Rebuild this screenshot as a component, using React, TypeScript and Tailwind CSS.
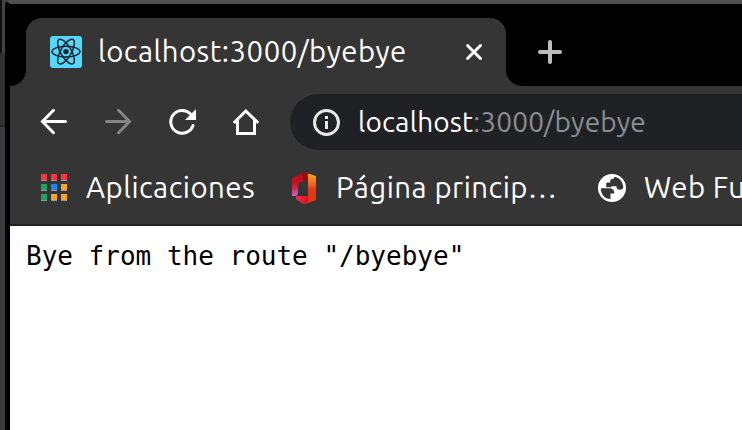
import type { ReactNode } from "react";

const UI_FONT = "font-['Ubuntu','Noto_Sans',sans-serif]";

function ReactLogo() {
  return (
    <svg className="h-8 w-8 shrink-0" viewBox="0 0 32 32" fill="none">
      <rect width="32" height="32" rx="3" fill="#53d7fb" />
      <g stroke="#16242b" strokeWidth="1.5">
        <ellipse cx="16" cy="15.6" rx="14" ry="5.3" />
        <ellipse cx="16" cy="15.6" rx="14" ry="5.3" transform="rotate(60 16 15.6)" />
        <ellipse cx="16" cy="15.6" rx="14" ry="5.3" transform="rotate(120 16 15.6)" />
      </g>
      <circle cx="16" cy="15.6" r="2.7" fill="#16242b" />
    </svg>
  );
}

function NavIcon({ children, color = "text-white" }: { children: ReactNode; color?: string }) {
  return (
    <svg className={`h-8 w-8 shrink-0 ${color}`} viewBox="0 0 32 32" fill="none" stroke="currentColor" strokeWidth="3">
      {children}
    </svg>
  );
}

function AppsGrid() {
  const tiles = ["#fd3639", "#fd3639", "#fd3639", "#1da462", "#1588f5", "#f6a42c", "#1da462", "#f6a42c", "#f6a42c"];
  return (
    <div className="grid w-[26px] shrink-0 grid-cols-[6px_6px_6px] gap-x-1 gap-y-[3px]">
      {tiles.map((color, i) => (
        <div key={i} className="h-[7px] border-b border-[#969696]" style={{ backgroundColor: color }} />
      ))}
    </div>
  );
}

function OfficeLogo() {
  return (
    <svg className="h-8 w-[26px] shrink-0" viewBox="0 0 26 32">
      <defs>
        <linearGradient id="left" x1="0" y1="0" x2="0" y2="1">
          <stop offset="0" stopColor="#a90b10" />
          <stop offset=".55" stopColor="#cc1730" />
          <stop offset="1" stopColor="#ca65b5" />
        </linearGradient>
        <linearGradient id="right" x1="0" y1="0" x2="0" y2="1">
          <stop offset="0" stopColor="#fba51e" />
          <stop offset=".35" stopColor="#ed6523" />
          <stop offset=".55" stopColor="#df3a16" />
          <stop offset="1" stopColor="#df3a16" />
        </linearGradient>
        <linearGradient id="foot">
          <stop offset="0" stopColor="#ff2945" />
          <stop offset="1" stopColor="#d01227" />
        </linearGradient>
      </defs>
      <path d="M1 6 12 0.5h4V8L8.5 10.5 7 13v9l-2 2H1Z" fill="url(#left)" />
      <path d="M11 1.2 15 0l2 1.5V8l-4 1Z" fill="#8d1011" />
      <path d="M5 24h12v7l-2 1h-3l-7-5Z" fill="url(#foot)" />
      <path d="M17 1.5 25 4v24l-8 3Z" fill="url(#right)" />
    </svg>
  );
}

function Globe() {
  return (
    <svg className="h-[34px] w-[34px] shrink-0" viewBox="0 0 34 34">
      <circle cx="17" cy="17" r="14" fill="#fff" />
      <g fill="#353535">
        <path d="M5.8 17.3h8.5c3 0 5 1.8 5 4.7 0 .4-.2.6-.6.6h-3.2v5.5C9.7 28 5.8 23.5 5.8 17.3Z" />
        <path d="M19.4 5.8C25 6.8 28.3 11.5 28.3 17q-1 1.8-3.4 1.8c-2.4 0-3.5-1.5-3.5-3.5h-5v1h-5.2v-3.4q0-1.3 1.5-1.3h2.6v-2q0-1.6 1.8-1.6h.5q1.8 0 1.8-2.2Z" />
      </g>
    </svg>
  );
}

function TabBar() {
  return (
    <div className="flex h-[82px] shrink-0 bg-black">
      <div className="w-4 shrink-0 self-end bg-[#353535]">
        <div className="h-4 rounded-br-[16px] bg-black" />
      </div>
      <div className="mt-[14px] flex w-[480px] shrink-0 items-start rounded-t-[16px] bg-[#353535] pt-[18px] pl-6">
        <ReactLogo />
        <span className={`ml-4 w-[367px] shrink-0 text-[29.33px] leading-8 tracking-[0.5px] text-white ${UI_FONT}`}>
          localhost:3000/byebye
        </span>
        <svg className="mt-[7px] h-[18px] w-[18px]" viewBox="0 0 18 18" stroke="#fff" strokeWidth="3" strokeLinecap="round">
          <path d="m2.5 2.5 13 13m0-13-13 13" />
        </svg>
      </div>
      <div className="w-4 shrink-0 self-end bg-[#353535]">
        <div className="h-4 rounded-bl-[16px] bg-black" />
      </div>
      <svg className="mt-9 ml-4 h-6 w-6" viewBox="0 0 24 24" stroke="#bdbdbd" strokeWidth="4" strokeLinecap="round">
        <path d="M2 12h20M12 2v20" />
      </svg>
    </div>
  );
}

function Toolbar() {
  return (
    <div className="flex h-[72px] shrink-0 items-center bg-[#353535] pl-7">
      <div className="flex gap-8">
        <NavIcon><path d="M27.5 15.5H5M15.5 4.3 4.5 15.5l11 11.2" strokeLinecap="round" /></NavIcon>
        <NavIcon color="text-[#858585]"><path d="M4.5 15.5H27M16.5 4.3l11 11.2-11 11.2" strokeLinecap="round" /></NavIcon>
        <NavIcon>
          <path d="M27 19.5A11.4 11.4 0 1 1 24.5 8" strokeLinecap="round" />
          <path d="M30 3v11H19Z" fill="currentColor" stroke="none" />
        </NavIcon>
        <NavIcon>
          <path d="m3.8 17 12-12 12.4 12M7.5 14v13.5h17V14" />
        </NavIcon>
      </div>
      <div className="ml-7 flex h-14 flex-1 items-center overflow-hidden rounded-l-full bg-[#202124] pl-[22px]">
        <svg className="h-[30px] w-[30px] shrink-0" viewBox="0 0 30 30" fill="none">
          <circle cx="14.5" cy="15.5" r="12" stroke="#e8e8e8" strokeWidth="3" />
          <path d="M14.5 14v8M14.5 9v3" stroke="#e8e8e8" strokeWidth="3" />
        </svg>
        <span className={`ml-4 text-[28px] leading-8 tracking-[0.15px] whitespace-nowrap text-[#8b8e91] ${UI_FONT}`}>
          <span className="text-white">localhost</span>:3000/byebye
        </span>
      </div>
    </div>
  );
}

function Bookmarks() {
  return (
    <div className={`flex h-[68px] shrink-0 items-center overflow-hidden border-b-2 border-[#202124] bg-[#353535] pb-[6px] pl-[31px] text-[29.33px] leading-8 tracking-[0.5px] whitespace-nowrap text-white ${UI_FONT}`}>
      <div className="-mt-px"><AppsGrid /></div>
      <span className="ml-[19px] w-[171px] shrink-0">Aplicaciones</span>
      <span className="ml-[34px] flex"><OfficeLogo /></span>
      <span className="ml-[19px] w-[222px] shrink-0">Página princip…</span>
      <span className="ml-[37px] flex"><Globe /></span>
      <span className="ml-[15px] shrink-0">Web Fu</span>
    </div>
  );
}

export default function App() {
  return (
    <div className="flex h-[430px] w-[742px] overflow-hidden bg-[#3a3b3d]">
      <div className="flex w-[10px] shrink-0 flex-col">
        <div className="h-[53px] border-l-2 border-[#101010] bg-[#444444]" />
        <div className="h-[74px] border-b-2 border-[#252525] bg-[#303030]" />
        <div className="flex-1 bg-[#3a3b3d]" />
      </div>
      <div className="-ml-[5px] flex min-w-0 flex-1 flex-col rounded-tl-[5px] border-t-4 border-l-[5px] border-t-[#505050] border-l-black bg-black">
        <TabBar />
        <Toolbar />
        <Bookmarks />
        <main className="flex-1 bg-white px-4 pt-[15px] font-['DejaVu_Sans_Mono',monospace] text-[26px] leading-[30px] whitespace-nowrap text-black">
          Bye from the route "/byebye"
        </main>
      </div>
    </div>
  );
}
